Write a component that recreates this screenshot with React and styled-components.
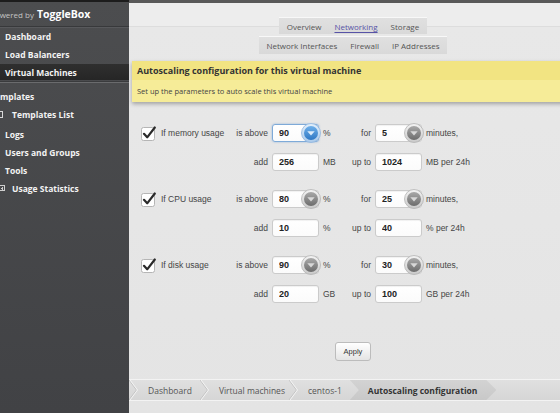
import React, { useId } from "react";
import styled, { createGlobalStyle } from "styled-components";

const Global = createGlobalStyle`
  html, body { margin: 0; padding: 0; }
  body {
    width: 560px; height: 413px; overflow: hidden; background: #e6e6e6;
    font-family: "Open Sans", "DejaVu Sans", sans-serif;
  }
  * { box-sizing: border-box; }
`;

const Shell = styled.div`
  display: flex;
  width: 560px;
  height: 413px;
  overflow: hidden;
`;

/* ---------- Sidebar ---------- */
const Sidebar = styled.aside`
  width: 129px;
  flex: none;
  border-top: 2px solid #1c1c1c;
  background: linear-gradient(#4c4d4f, #414245);
  color: #f2f2f2;
  overflow: hidden;
`;

const Brand = styled.div`
  height: 25px;
  margin-left: -10px;
  display: flex;
  align-items: center;
  gap: 3px;
  white-space: nowrap;
  border-bottom: 1px solid #38393b;
  box-shadow: 0 1px 0 #58595c;
`;

const Powered = styled.span`
  font-size: 8px;
  color: #c4c4c4;
`;

const BrandName = styled.span`
  font-size: 10.5px;
  font-weight: 700;
  color: #fff;
`;

const Nav = styled.nav`
  display: flex;
  flex-direction: column;
`;

const NavItem = styled.div`
  height: ${(p) => (p.$active ? 16 : 18)}px;
  margin-top: ${(p) => p.$mt || 0}px;
  margin-left: ${(p) => p.$ml || 0}px;
  padding-left: ${(p) => (p.$indent ?? 5)}px;
  display: flex;
  align-items: center;
  gap: ${(p) => p.$gap || 0}px;
  font-size: 8.5px;
  font-weight: 700;
  white-space: nowrap;
  color: #f3f3f3;
  background: ${(p) => (p.$active ? "linear-gradient(#2f2f2f, #262626)" : "transparent")};
`;

const NavDivider = styled.div`
  height: 1px;
  margin: 2px 0 4px;
  background: #6a6b6d;
  box-shadow: 0 -1px 0 #3a3b3d;
`;

const BoxIcon = styled.span`
  width: 6px;
  height: 7px;
  flex: none;
  border: 1px solid #d8d8d8;
`;

const PlusIcon = styled.span`
  position: relative;
  width: 6px;
  height: 6px;
  flex: none;
  border: 1px solid #cfcfcf;
  &::before, &::after {
    content: "";
    position: absolute;
    background: #cfcfcf;
  }
  &::before { left: 1px; right: 1px; top: 1.5px; height: 1px; }
  &::after { top: 0.5px; bottom: 0.5px; left: 1.5px; width: 1px; }
`;

/* ---------- Main ---------- */
const Main = styled.main`
  flex: 1;
  min-width: 0;
  overflow: hidden;
  border-top: 3px solid #595959;
  background: linear-gradient(
    #ededed 0, #ededed 23px, #dddddd 23px, #dddddd 24px, #e8e8e8 24px, #e4e4e4 100%
  );
`;

const Content = styled.div`
  width: 448px;
  display: flex;
  flex-direction: column;
`;

const Tabs = styled.div`
  padding-top: 14px;
  display: flex;
  flex-direction: column;
  align-items: center;
  gap: 2px;
`;

const TabRow = styled.div`
  height: ${(p) => p.$h}px;
  display: flex;
  padding: 0 1px;
  border-top: 1px solid #f8f8f8;
  background: linear-gradient(#e0e0e0, #d9d9d9);
`;

const Tab = styled.span`
  padding: 0 6.5px;
  display: flex;
  align-items: center;
  font-size: 8px;
  color: ${(p) => (p.$active ? "#5753a6" : "#555")};
  text-decoration: ${(p) => (p.$active ? "underline" : "none")};
  text-underline-offset: 1.5px;
  white-space: nowrap;
`;

const Notice = styled.section`
  margin: 7px 0 0 3px;
  width: 445px;
  box-shadow: 0 2px 4px rgba(0, 0, 0, 0.3);
`;

const NoticeTitle = styled.h2`
  margin: 0;
  height: 19px;
  padding-left: 5px;
  display: flex;
  align-items: center;
  font-size: 9px;
  font-weight: 700;
  color: #333;
  background: #f2e482;
`;

const NoticeBody = styled.p`
  margin: 0;
  height: 22px;
  padding-left: 5px;
  display: flex;
  align-items: center;
  font-size: 7.5px;
  color: #444;
  background: #f6ec98;
`;

const Form = styled.div`
  padding: 22px 0 0 12px;
  display: flex;
  flex-direction: column;
  gap: 19px;
  font-family: "Liberation Sans", Arial, sans-serif;
`;

const Group = styled.div`
  display: flex;
  flex-direction: column;
  gap: 11px;
`;

const Row = styled.div`
  height: 18px;
  display: grid;
  grid-template-columns: 90px 33px 47px 23px 21px 47px auto;
  column-gap: 4px;
  align-items: center;
  font-size: 8.5px;
  color: #454545;
  white-space: nowrap;
`;

const CheckCell = styled.label`
  display: flex;
  align-items: center;
  gap: 5px;
`;

const Label = styled.span`
  text-align: right;
`;

const Text = styled.span``;

const Field = styled.div`
  position: relative;
  width: 47px;
  height: 18px;
`;

const Input = styled.input`
  width: 100%;
  height: 100%;
  margin: 0;
  padding: 0 0 0 6px;
  border: 1px solid ${(p) => (p.$focus ? "#7eaad8" : "#cbcbcb")};
  border-radius: 3px;
  background: linear-gradient(#fff, #fbfbfb);
  box-shadow: ${(p) =>
    p.$focus ? "0 0 2px rgba(80,140,210,0.6)" : "inset 0 1px 1px rgba(0,0,0,0.06)"};
  font-family: "Liberation Sans", Arial, sans-serif;
  font-size: 9px;
  font-weight: 700;
  color: #222;
  outline: none;
`;

const SpinSlot = styled.span`
  position: absolute;
  right: -2px;
  top: -1px;
  width: 20px;
  height: 20px;
  display: block;
`;

const Apply = styled.button`
  margin: 39px 0 0 206px;
  width: 36px;
  height: 19px;
  padding: 0;
  border: 1px solid #bcbcbc;
  border-radius: 3px;
  background: linear-gradient(#ffffff, #e4e4e4);
  font-family: "Liberation Sans", Arial, sans-serif;
  font-size: 7.5px;
  color: #333;
`;

const Crumbs = styled.nav`
  margin-top: 18px;
  height: 22px;
  display: flex;
  align-items: stretch;
  border-top: 1px solid #f3f3f3;
  border-bottom: 1px solid #f3f3f3;
  background: linear-gradient(#e0e0e0, #d6d6d6);
`;

const Crumb = styled.span`
  padding: 0 ${(p) => p.$pr ?? 6}px 0 10px;
  display: flex;
  align-items: center;
  font-size: 8.5px;
  color: #555;
  white-space: nowrap;
`;

const ActiveCrumb = styled.span`
  padding: 0 19px 0 18px;
  display: flex;
  align-items: center;
  font-size: 8.5px;
  font-weight: 700;
  color: #333;
  white-space: nowrap;
  background: linear-gradient(#d3d3d3, #c8c8c8);
  clip-path: polygon(0 0, calc(100% - 10px) 0, 100% 50%, calc(100% - 10px) 100%, 0 100%, 9px 50%);
`;

/* ---------- drawings ---------- */
function Chevron() {
  return (
    <svg width="9" height="20" viewBox="0 0 9 20" style={{ flex: "none", alignSelf: "center" }}>
      <polyline points="0,0 7.5,10 0,20" fill="none" stroke="#c2c2c2" strokeWidth="1" />
      <polyline points="1,0 8.5,10 1,20" fill="none" stroke="#f4f4f4" strokeWidth="1" />
    </svg>
  );
}

function CheckBox() {
  return (
    <svg width="15" height="15" viewBox="0 0 15 15">
      <rect x="0.5" y="1.5" width="13" height="13" rx="2" fill="#fff" stroke="#b5b5b5" />
      <path d="M3 7.8 L6.2 11.3 L13.8 1.5" fill="none" stroke="#2a2a2a" strokeWidth="2.2" strokeLinecap="round" strokeLinejoin="round" />
    </svg>
  );
}

function Spinner({ blue }) {
  const id = useId().replace(/:/g, "");
  const inA = blue ? "#6fb0ea" : "#a9a9a9";
  const inB = blue ? "#2f78c4" : "#6c6c6c";
  const ringA = blue ? "#e4f0fb" : "#f4f4f4";
  const ringB = blue ? "#a9c9ea" : "#c9c9c9";
  const tri = blue ? "#dcecfb" : "#d8d8d8";
  return (
    <SpinSlot>
      <svg width="20" height="20" viewBox="0 0 20 20">
        <defs>
          <linearGradient id={`r${id}`} x1="0" y1="0" x2="0" y2="1">
            <stop offset="0" stopColor={ringA} />
            <stop offset="1" stopColor={ringB} />
          </linearGradient>
          <linearGradient id={`i${id}`} x1="0" y1="0" x2="0" y2="1">
            <stop offset="0" stopColor={inA} />
            <stop offset="1" stopColor={inB} />
          </linearGradient>
        </defs>
        <circle cx="10" cy="10" r="9.5" fill={`url(#r${id})`} stroke={blue ? "#8fb5de" : "#b3b3b3"} strokeWidth="0.8" />
        <circle cx="10" cy="10" r="7" fill={`url(#i${id})`} />
        <path d="M6.3 8.3 L13.7 8.3 L10 12.6 Z" fill={tri} />
      </svg>
    </SpinSlot>
  );
}

function NumberField({ value, spin, focus }) {
  return (
    <Field>
      <Input readOnly value={value} $focus={focus} />
      {spin && <Spinner blue={focus} />}
    </Field>
  );
}

const groups = [
  { label: "If memory usage", above: "90", mins: "5", add: "256", unit: "MB", upto: "1024", per: "MB per 24h", focus: true },
  { label: "If CPU usage", above: "80", mins: "25", add: "10", unit: "%", upto: "40", per: "% per 24h" },
  { label: "If disk usage", above: "90", mins: "30", add: "20", unit: "GB", upto: "100", per: "GB per 24h" },
];

export default function App() {
  return (
    <Shell>
      <Global />
      <Sidebar>
        <Brand>
          <Powered>Powered by</Powered>
          <BrandName>ToggleBox</BrandName>
        </Brand>
        <Nav>
          <NavItem>Dashboard</NavItem>
          <NavItem>Load Balancers</NavItem>
          <NavItem $active $mt={1}>Virtual Machines</NavItem>
          <NavDivider />
          <NavItem $ml={-10} $indent={0}>Templates</NavItem>
          <NavItem $ml={-3} $indent={0} $gap={9}>
            <BoxIcon />
            Templates List
          </NavItem>
          <NavItem $mt={2}>Logs</NavItem>
          <NavItem>Users and Groups</NavItem>
          <NavItem>Tools</NavItem>
          <NavItem $ml={-1} $indent={0} $gap={7}>
            <PlusIcon />
            Usage Statistics
          </NavItem>
        </Nav>
      </Sidebar>

      <Main>
        <Content>
          <Tabs>
            <TabRow $h={17}>
              <Tab>Overview</Tab>
              <Tab $active>Networking</Tab>
              <Tab>Storage</Tab>
            </TabRow>
            <TabRow $h={18}>
              <Tab>Network Interfaces</Tab>
              <Tab>Firewall</Tab>
              <Tab>IP Addresses</Tab>
            </TabRow>
          </Tabs>

          <Notice>
            <NoticeTitle>Autoscaling configuration for this virtual machine</NoticeTitle>
            <NoticeBody>Set up the parameters to auto scale this virtual machine</NoticeBody>
          </Notice>

          <Form>
            {groups.map((g) => (
              <Group key={g.label}>
                <Row>
                  <CheckCell>
                    <CheckBox />
                    {g.label}
                  </CheckCell>
                  <Label>is above</Label>
                  <NumberField value={g.above} spin focus={g.focus} />
                  <Text>%</Text>
                  <Label>for</Label>
                  <NumberField value={g.mins} spin />
                  <Text>minutes,</Text>
                </Row>
                <Row>
                  <span />
                  <Label>add</Label>
                  <NumberField value={g.add} />
                  <Text>{g.unit}</Text>
                  <Label>up to</Label>
                  <NumberField value={g.upto} />
                  <Text>{g.per}</Text>
                </Row>
              </Group>
            ))}
          </Form>

          <Apply type="button">Apply</Apply>

          <Crumbs>
            <Chevron />
            <Crumb $pr={8}>Dashboard</Crumb>
            <Chevron />
            <Crumb $pr={4}>Virtual machines</Crumb>
            <Chevron />
            <Crumb $pr={8}>centos-1</Crumb>
            <ActiveCrumb>Autoscaling configuration</ActiveCrumb>
          </Crumbs>
        </Content>
      </Main>
    </Shell>
  );
}
